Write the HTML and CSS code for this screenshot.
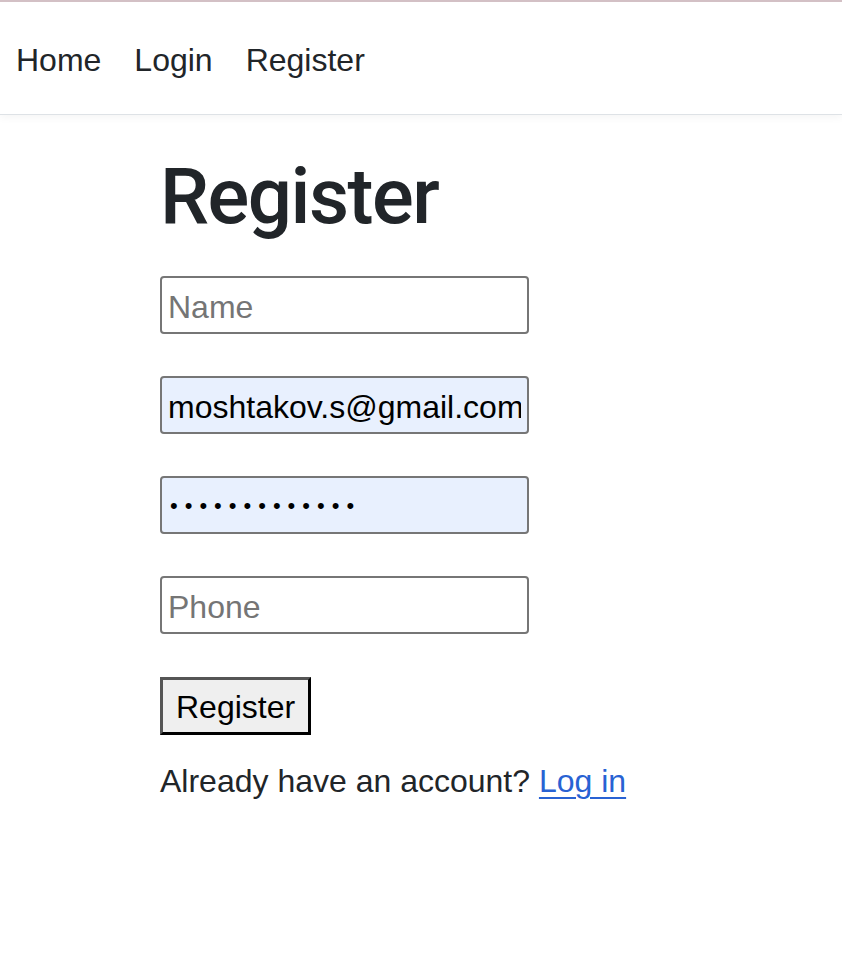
FILE: index.html
```html
<!DOCTYPE html>
<html lang="en">
<head>
<meta charset="utf-8">
<title>Register</title>
<link rel="stylesheet" href="styles.css">
</head>
<body>
<nav class="topnav">
  <a class="nav-link" href="#">Home</a>
  <a class="nav-link" href="#">Login</a>
  <a class="nav-link" href="#">Register</a>
</nav>
<main class="page">
  <h1 class="title">Register</h1>
  <form class="form">
    <input class="field" type="text" placeholder="Name">
    <input class="field autofilled" type="email" value="moshtakov.s@gmail.com">
    <input class="field autofilled pw" type="password" value="abcdefghijklm">
    <input class="field" type="tel" placeholder="Phone">
    <button class="btn" type="button">Register</button>
  </form>
  <p class="note">Already have an account? <a class="link" href="#">Log in</a></p>
</main>
</body>
</html>
```
FILE: styles.css
```css
html, body {
  margin: 0;
  background: #fff;
}
body {
  border-top: 2px solid #d3c0c5;
  font-family: "Liberation Sans", Arial, sans-serif;
  color: #212529;
}
.topnav {
  box-sizing: border-box;
  height: 113px;
  padding: 40px 16px 0;
  display: flex;
  gap: 33px;
  border-bottom: 1px solid #dee2e6;
  box-shadow: 0 3px 8px rgba(0, 0, 0, 0.04);
  font-size: 32px;
  line-height: 37px;
}
.nav-link {
  color: #212529;
  text-decoration: none;
}
.page {
  padding: 35px 0 0 160px;
}
.title {
  margin: 0 0 32px;
  font-family: Roboto, "Liberation Sans", sans-serif;
  font-weight: 500;
  font-size: 78px;
  line-height: 1.2;
  letter-spacing: -1.5px;
  color: #212529;
}
.form {
  display: flex;
  flex-direction: column;
  align-items: flex-start;
  gap: 42px;
  margin: 0;
}
.field {
  box-sizing: border-box;
  width: 369px;
  height: 58px;
  margin: 0;
  padding: 5px 6px 0;
  border: 2px solid #767676;
  border-radius: 4px;
  background: #fff;
  font-family: "Liberation Sans", Arial, sans-serif;
  font-size: 32px;
  color: #000;
  outline: none;
}
.field::placeholder {
  color: #757575;
}
.autofilled {
  background: #e8f0fe;
}
.pw {
  font-size: 22px;
  letter-spacing: 7px;
  padding-top: 2px;
  padding-left: 8px;
}
.btn {
  box-sizing: border-box;
  height: 58px;
  margin-top: 1px;
  padding: 3px 13px 0;
  border: 3px solid;
  border-color: #555 #000 #000 #555;
  background: #efefef;
  font-family: "Liberation Sans", Arial, sans-serif;
  font-size: 32px;
  color: #000;
}
.note {
  margin: 28px 0 0;
  font-size: 32px;
  line-height: 37px;
}
.link {
  color: #2862d3;
  text-decoration: underline;
  text-decoration-thickness: 2px;
  text-underline-offset: 5px;
}
```
